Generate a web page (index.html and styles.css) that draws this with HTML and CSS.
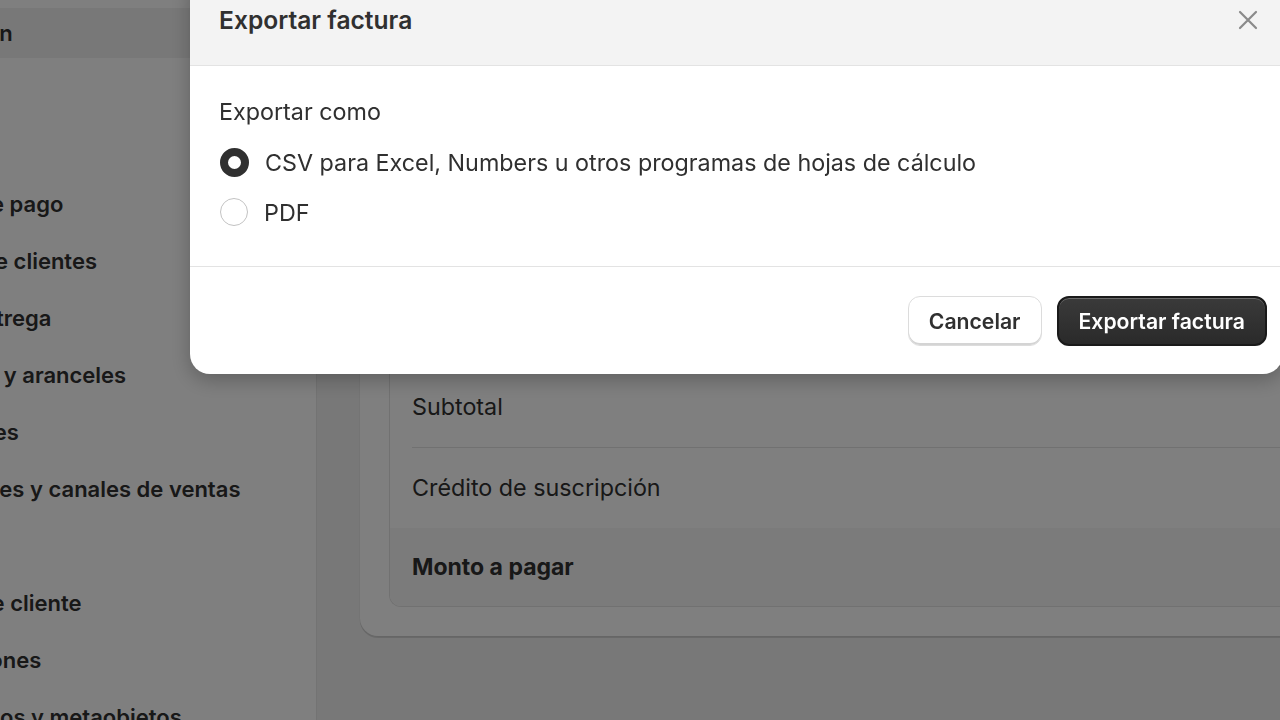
FILE: index.html
```html
<!DOCTYPE html>
<html lang="es">
<head>
    <meta charset="UTF-8">
    <meta name="viewport" content="width=device-width, initial-scale=1.0">
    <title>Facturación</title>
    <link rel="stylesheet" href="styles.css">
</head>
<body>
    <div class="admin">
        <nav class="sidebar">
            <ul class="nav-list">
                <li class="nav-item selected">Facturación</li>
                <li class="nav-item">Usuarios</li>
                <li class="nav-item">Pagos</li>
                <li class="nav-item">Pantalla de pago</li>
                <li class="nav-item">Cuentas de clientes</li>
                <li class="nav-item">Envío y entrega</li>
                <li class="nav-item">Impuestos y aranceles</li>
                <li class="nav-item">Ubicaciones</li>
                <li class="nav-item">Aplicaciones y canales de ventas</li>
                <li class="nav-item">Dominios</li>
                <li class="nav-item">Eventos de cliente</li>
                <li class="nav-item">Notificaciones</li>
                <li class="nav-item">Metacampos y metaobjetos</li>
            </ul>
        </nav>

        <main class="main">
            <section class="card">
                <div class="summary">
                    <div class="summary-row">Cargos de la factura</div>
                    <div class="summary-row">Subtotal</div>
                    <div class="summary-row">Crédito de suscripción</div>
                    <div class="summary-row total">Monto a pagar</div>
                </div>
            </section>
        </main>
    </div>

    <div class="backdrop"></div>

    <div class="modal">
        <div class="modal-header">
            <h2 class="modal-title">Exportar factura</h2>
            <button class="close-btn" aria-label="Cerrar">
                <svg width="22" height="22" viewBox="0 0 22 22">
                    <path d="M3 3 L19 19 M19 3 L3 19" stroke="#8a8a8a" stroke-width="2.2" stroke-linecap="round" fill="none"/>
                </svg>
            </button>
        </div>

        <div class="modal-body">
            <p class="field-label">Exportar como</p>
            <label class="radio-row">
                <span class="radio checked"></span>
                CSV para Excel, Numbers u otros programas de hojas de cálculo
            </label>
            <label class="radio-row">
                <span class="radio"></span>
                PDF
            </label>
        </div>

        <div class="modal-footer">
            <button class="btn btn-secondary">Cancelar</button>
            <button class="btn btn-primary">Exportar factura</button>
        </div>
    </div>
</body>
</html>
```

FILE: styles.css
```css
body {
    margin: 0;
    font-family: 'Inter', 'Noto Sans', sans-serif;
    color: #303030;
    background-color: #f1f1f1;
    overflow: hidden;
    height: 720px;
}

.admin {
    display: flex;
    height: 720px;
}

/* sidebar with the settings menu */
.sidebar {
    width: 316px;
    flex-shrink: 0;
    background: #ffffff;
    border-right: 1px solid #e6e6e6;
    overflow: hidden;
}

.nav-list {
    list-style: none;
    margin: 8px 0 0 -113px;
    padding: 0;
    display: flex;
    flex-direction: column;
    gap: 7px;
}

.nav-item {
    height: 50px;
    line-height: 50px;
    font-size: 22px;
    font-weight: 600;
    white-space: nowrap;
    border-radius: 12px;
}

.nav-item.selected {
    background: #f1f1f1;
}

/* invoice page */
.main {
    flex: 1;
    padding: 256px 0 0 43px;
}

.card {
    background: #ffffff;
    border-radius: 18px 0 0 18px;
    padding: 29px 0 29px 29px;
    box-shadow: 0 2px 0 rgba(0, 0, 0, 0.12), 0 0 0 1px rgba(0, 0, 0, 0.03);
}

.summary {
    border: 1px solid #e3e3e3;
    border-right: none;
    border-radius: 12px 0 0 12px;
    overflow: hidden;
}

.summary-row {
    height: 80px;
    line-height: 80px;
    margin-left: 22px;
    font-size: 23.3px;
    border-top: 1px solid #e3e3e3;
}

.summary-row:first-child {
    border-top: none;
}

.summary-row.total {
    height: 78px;
    line-height: 78px;
    margin-left: 0;
    padding-left: 22px;
    border-top: none;
    background: #f7f7f7;
    font-size: 23px;
    font-weight: 700;
}

/* dim layer under the dialog */
.backdrop {
    position: fixed;
    inset: 0;
    background: rgba(0, 0, 0, 0.5);
}

.modal {
    position: fixed;
    left: 190px;
    top: -26px;
    width: 1093px;
    background: #ffffff;
    border-radius: 20px;
    overflow: hidden;
    box-shadow: 0 6px 20px rgba(0, 0, 0, 0.25);
}

.modal-header {
    height: 91px;
    background: #f3f3f3;
    border-bottom: 1px solid #e3e3e3;
    display: flex;
    align-items: center;
    justify-content: space-between;
    padding: 0 24px 0 29px;
}

.modal-title {
    margin: 0;
    font-size: 24.6px;
    font-weight: 600;
}

.close-btn {
    background: none;
    border: none;
    padding: 0;
    width: 22px;
    height: 22px;
    cursor: pointer;
}

.modal-body {
    padding: 29px;
}

.field-label {
    margin: 0 0 8px;
    height: 34px;
    line-height: 34px;
    font-size: 23.3px;
}

.radio-row {
    display: flex;
    align-items: center;
    gap: 16px;
    height: 50px;
    font-size: 23.3px;
    padding-left: 1px;
}

.radio {
    width: 28px;
    height: 28px;
    box-sizing: border-box;
    border-radius: 50%;
    border: 1.5px solid #c2c2c2;
    background: #ffffff;
}

.radio.checked {
    width: 29px;
    height: 29px;
    border: 8px solid #303030;
}

.modal-footer {
    border-top: 1px solid #e3e3e3;
    padding: 29px 16px 28px 29px;
    display: flex;
    justify-content: flex-end;
    gap: 15px;
}

.btn {
    height: 50px;
    padding: 0 20px;
    border-radius: 12px;
    font-family: inherit;
    font-size: 21.2px;
    font-weight: 600;
    cursor: pointer;
}

.btn-secondary {
    background: #ffffff;
    color: #303030;
    border: 1px solid #dcdcdc;
    box-shadow: inset 0 -2px 0 #d4d4d4;
}

.btn-primary {
    background: linear-gradient(#3a3a3a, #2a2a2a);
    color: #ffffff;
    border: 2px solid #1a1a1a;
    box-shadow: inset 0 1px 0 rgba(255, 255, 255, 0.25);
}
```
